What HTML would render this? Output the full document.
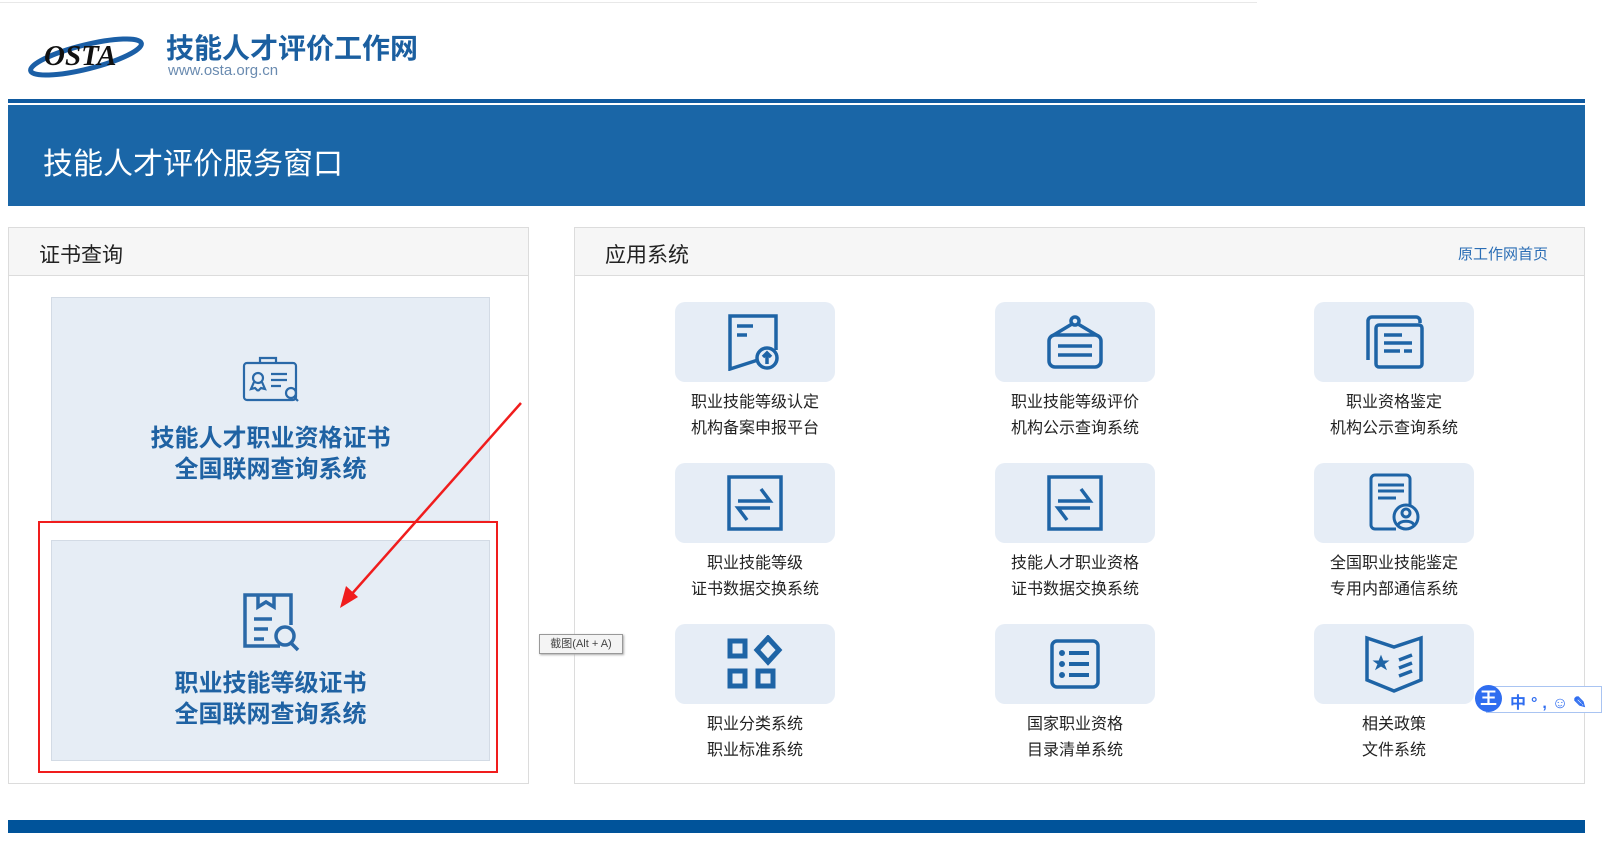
<!DOCTYPE html>
<html><head><meta charset="utf-8"><style>
*{margin:0;padding:0;box-sizing:border-box}
body{width:1602px;height:851px;background:#fff;position:relative;overflow:hidden;font-family:"Liberation Sans","Noto Sans CJK SC",sans-serif}
.a{position:absolute}
.tile{position:absolute;width:160px;height:80px;background:#e6edf6;border-radius:10px;display:flex;align-items:center;justify-content:center}
.lbl{position:absolute;width:220px;text-align:center;font-size:16px;line-height:26px;color:#222}
.card{position:absolute;left:51px;width:439px;background:#e6edf5;border:1px solid #d3dbe5;text-align:center}
.card .t{color:#1f62a3;font-size:24px;font-weight:bold;line-height:31px}
</style></head><body>
<div class="a" style="left:0;top:2px;width:1257px;height:1px;background:#e8e8e8"></div>
<svg class="a" style="left:26px;top:30px" width="120" height="48" viewBox="0 0 120 48">
<ellipse cx="60" cy="27" rx="57" ry="12" fill="none" stroke="#1b5fa6" stroke-width="5" transform="rotate(-14 60 27)"/>
<text x="18" y="35" font-family="Liberation Serif" font-style="italic" font-weight="bold" font-size="29" fill="#111">OSTA</text>
</svg>
<div class="a" style="left:166px;top:27px;font-size:28px;font-weight:bold;color:#1b5fa0">技能人才评价工作网</div>
<div class="a" style="left:168px;top:62px;font-size:15px;color:#6a8bb0">www.osta.org.cn</div>
<div class="a" style="left:8px;top:99px;width:1577px;height:4px;background:#0f5aa0"></div>
<div class="a" style="left:8px;top:105px;width:1577px;height:101px;background:#1a66a7"></div>
<div class="a" style="left:43px;top:139px;font-size:30px;color:#fff">技能人才评价服务窗口</div>

<div class="a" style="left:8px;top:227px;width:521px;height:557px;border:1px solid #dcdcdc"></div>
<div class="a" style="left:9px;top:228px;width:519px;height:48px;background:#f6f6f6;border-bottom:1px solid #dcdcdc"></div>
<div class="a" style="left:39px;top:239px;font-size:21px;color:#222">证书查询</div>
<div class="card" style="top:297px;height:224px">
<svg style="margin-top:58px" width="58" height="48" viewBox="0 0 58 48" fill="none" stroke="#2a69a8" stroke-width="2.2"><rect x="2" y="7" width="52" height="37" rx="3"/><path d="M18 7V2h16v5"/><circle cx="16" cy="22" r="5"/><path d="M12 26l-3 7 4-1 3 3M20 26l3 7-4-1-3 3"/><path d="M29 18h16M29 24h16M29 30h10"/><circle cx="49" cy="37" r="5"/><path d="M52 41l4 4"/></svg>
<div class="t" style="margin-top:14px">技能人才职业资格证书<br>全国联网查询系统</div></div>
<div class="card" style="top:540px;height:221px">
<svg style="margin-top:50px" width="62" height="62" viewBox="0 0 62 62" fill="none" stroke="#2a69a8" stroke-width="3.5"><path d="M40 55H5V4h46v30"/><path d="M18 4v12l8-5 8 5V4"/><path d="M14 28h18M14 38h14M14 48h10"/><circle cx="45" cy="45" r="9"/><path d="M51 52l7 7"/></svg>
<div class="t" style="margin-top:10px">职业技能等级证书<br>全国联网查询系统</div></div>

<div class="a" style="left:574px;top:227px;width:1011px;height:557px;border:1px solid #dcdcdc"></div>
<div class="a" style="left:575px;top:228px;width:1009px;height:48px;background:#f6f6f6;border-bottom:1px solid #dcdcdc"></div>
<div class="a" style="left:605px;top:239px;font-size:21px;color:#222">应用系统</div>
<div class="a" style="left:1458px;top:243px;font-size:15px;color:#2a6db5">原工作网首页</div>

<div class="tile" style="left:675px;top:302px"><svg width="56" height="58" viewBox="0 0 56 58" fill="none" stroke="#1e64a6" stroke-width="3.5"><path d="M34 46L3 56V3h46v34"/><path d="M10 13h16M10 22h10"/><circle cx="40" cy="45" r="10" fill="#e6edf6"/><path d="M40 51V40M36 44l4-4 4 4"/></svg></div>
<div class="tile" style="left:995px;top:302px"><svg width="58" height="56" viewBox="0 0 58 56" fill="none" stroke="#1e64a6" stroke-width="3.5"><circle cx="29" cy="7" r="4"/><path d="M26 10L6 22M32 10l20 12"/><rect x="3" y="21" width="52" height="32" rx="6"/><path d="M12 32h34M12 41h34"/></svg></div>
<div class="tile" style="left:1314px;top:302px"><svg width="62" height="58" viewBox="0 0 62 58" fill="none" stroke="#1e64a6" stroke-width="3.5"><path d="M5 47V8a4 4 0 014-4h44a4 4 0 014 4v2"/><rect x="13" y="12" width="46" height="42" rx="3"/><path d="M21 22h18M21 30h28M21 38h16M41 38h8"/></svg></div>

<div class="tile" style="left:675px;top:463px"><svg width="58" height="58" viewBox="0 0 58 58" fill="none" stroke="#1e64a6" stroke-width="3.5"><rect x="3" y="3" width="52" height="52"/><path d="M12 27h32l-9-12M44 34H12l9 12"/></svg></div>
<div class="tile" style="left:995px;top:463px"><svg width="58" height="58" viewBox="0 0 58 58" fill="none" stroke="#1e64a6" stroke-width="3.5"><rect x="3" y="3" width="52" height="52"/><path d="M12 27h32l-9-12M44 34H12l9 12"/></svg></div>
<div class="tile" style="left:1314px;top:463px"><svg width="56" height="60" viewBox="0 0 56 60" fill="none" stroke="#1e64a6" stroke-width="3"><path d="M30 56H9a4 4 0 01-4-4V6a4 4 0 014-4h31a4 4 0 014 4v26"/><path d="M12 12h26M12 18h26M12 25h18"/><circle cx="40" cy="44" r="12" fill="#e6edf6"/><circle cx="40" cy="40" r="4"/><path d="M32 52c2-5 14-5 16 0"/></svg></div>

<div class="tile" style="left:675px;top:624px"><svg width="58" height="58" viewBox="0 0 58 58" fill="none" stroke="#1e64a6" stroke-width="5"><rect x="4" y="6" width="15" height="15"/><path d="M42 3l11 12-11 12-11-12z"/><rect x="4" y="36" width="15" height="15"/><rect x="32" y="36" width="15" height="15"/></svg></div>
<div class="tile" style="left:995px;top:624px"><svg width="52" height="52" viewBox="0 0 52 52" fill="none" stroke="#1e64a6" stroke-width="3.5"><rect x="3" y="3" width="46" height="46" rx="5"/><path d="M20 15h20M20 26h20M20 37h20" stroke-width="4"/><circle cx="13" cy="15" r="1.5" stroke-width="3"/><circle cx="13" cy="26" r="1.5" stroke-width="3"/><circle cx="13" cy="37" r="1.5" stroke-width="3"/></svg></div>
<div class="tile" style="left:1314px;top:624px"><svg width="62" height="60" viewBox="0 0 62 60" fill="none" stroke="#1e64a6" stroke-width="3.5"><path d="M4 4l27 9 27-9v42L31 57 4 46z"/><path d="M18 22l2 5h5l-4 3 2 5-5-3-5 3 2-5-4-3h5z" fill="#1e64a6" stroke-width="1"/><path d="M36 26l13-5M36 34l13-5M36 42l13-5"/></svg></div>

<div class="lbl" style="left:645px;top:390px">职业技能等级认定<br>机构备案申报平台</div>
<div class="lbl" style="left:965px;top:390px">职业技能等级评价<br>机构公示查询系统</div>
<div class="lbl" style="left:1284px;top:390px">职业资格鉴定<br>机构公示查询系统</div>
<div class="lbl" style="left:645px;top:551px">职业技能等级<br>证书数据交换系统</div>
<div class="lbl" style="left:965px;top:551px">技能人才职业资格<br>证书数据交换系统</div>
<div class="lbl" style="left:1284px;top:551px">全国职业技能鉴定<br>专用内部通信系统</div>
<div class="lbl" style="left:645px;top:712px">职业分类系统<br>职业标准系统</div>
<div class="lbl" style="left:965px;top:712px">国家职业资格<br>目录清单系统</div>
<div class="lbl" style="left:1284px;top:712px">相关政策<br>文件系统</div>

<div class="a" style="left:8px;top:820px;width:1577px;height:13px;background:#00539a"></div>

<div class="a" style="left:38px;top:521px;width:460px;height:252px;border:2px solid #f01d1d"></div>
<svg class="a" style="left:0;top:0" width="1602" height="851"><path d="M521 403L350 596" stroke="#f01d1d" stroke-width="2.5"/><path d="M340 608l6-22 12 11z" fill="#f01d1d"/></svg>
<div class="a" style="left:539px;top:634px;width:84px;height:20px;border:1px solid #999;background:#f4f4f4;font-size:11px;color:#444;line-height:18px;text-align:center;box-shadow:1px 1px 2px #aaa">截图(Alt + A)</div>

<div class="a" style="left:1486px;top:686px;width:116px;height:27px;border:1px solid #a9c4f2;background:#fff"></div>
<div class="a" style="left:1475px;top:685px;width:27px;height:27px;border-radius:50%;background:#2f6df0;color:#fff;font-weight:bold;font-size:17px;text-align:center;line-height:27px">王</div>
<div class="a" style="left:1510px;top:689px;font-size:16px;color:#2f6df0;font-weight:bold;letter-spacing:5px">中°,☺✎</div>
</body></html>
